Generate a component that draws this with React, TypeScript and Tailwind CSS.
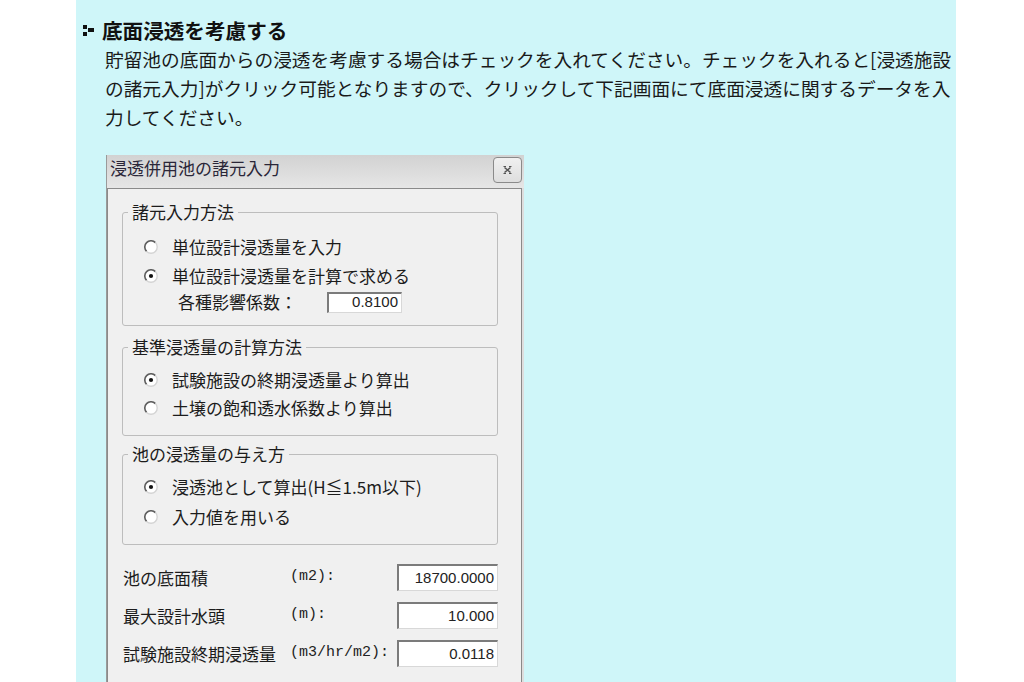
const jp = { fontFamily: '"Noto Sans CJK JP", "Noto Sans", sans-serif' };

const Radio = ({ checked }: { checked?: boolean }) => (
	<svg width="14" height="14" viewBox="0 0 14 14" className="shrink-0">
		<circle cx="7" cy="7" r="6" fill="#ffffff" />
		<path d="M2.6 11.4 A6.2 6.2 0 0 1 11.4 2.6" fill="none" stroke="#5e5e5e" strokeWidth="1.6" />
		<path d="M11.4 2.6 A6.2 6.2 0 0 1 2.6 11.4" fill="none" stroke="#d4d4d4" strokeWidth="1.4" />
		{checked && <circle cx="7" cy="7" r="2.1" fill="#111111" />}
	</svg>
);

const NumBox = ({ value, className }: { value: string; className: string }) => (
	<div
		className={`${className} bg-white border-t-2 border-l-2 border-r border-b border-t-[#7b7b7b] border-l-[#7b7b7b] border-r-[#d8d8d8] border-b-[#d8d8d8] flex items-center justify-end pr-[3px] text-[15px] text-[#222]`}
		style={{ fontFamily: '"Liberation Sans", Arial, sans-serif' }}
	>
		{value}
	</div>
);

const Group = ({
	title,
	children,
	className,
}: {
	title: string;
	children: React.ReactNode;
	className: string;
}) => (
	<fieldset className={`border border-[#bdbdbd] rounded-[3px] pl-[21px] ${className}`}>
		<legend className="px-[4px] -ml-[16px] leading-[20px]">{title}</legend>
		{children}
	</fieldset>
);

const RadioRow = ({ label, checked, h }: { label: string; checked?: boolean; h: string }) => (
	<div className={`flex items-center gap-[14px] ${h}`}>
		<Radio checked={checked} />
		<span>{label}</span>
	</div>
);

const FieldRow = ({ label, unit, value }: { label: string; unit: string; value: string }) => (
	<div className="flex items-center h-[27px]">
		<span className="w-[167px]">{label}</span>
		<span
			className="w-[107px] text-[15px] text-[#222]"
			style={{ fontFamily: '"Liberation Mono", "DejaVu Sans Mono", monospace' }}
		>
			{unit}
		</span>
		<NumBox value={value} className="w-[101px] h-[27px]" />
	</div>
);

export default function App() {
	return (
		<div className="w-[1024px] h-[682px] overflow-hidden bg-white flex" style={jp}>
			<div className="ml-[76px] w-[880px] h-full bg-[#cff6f9] pt-[18px] pl-[7px]">
				<div className="flex items-center h-[24px] gap-[7px]">
					<svg width="12" height="11" viewBox="0 0 12 11">
						<rect x="0" y="0" width="4" height="4" fill="#111" />
						<rect x="5" y="3" width="6" height="4" fill="#111" />
						<rect x="0" y="7" width="4" height="4" fill="#111" />
					</svg>
					<span className="text-[20.6px] font-bold text-[#111] leading-[24px]">底面浸透を考慮する</span>
				</div>
				<div className="ml-[22px] mt-[1.5px] text-[18.7px] leading-[29px] text-[#1a1a1a] whitespace-nowrap">
					<div>貯留池の底面からの浸透を考慮する場合はチェックを入れてください。チェックを入れると[浸透施設</div>
					<div>の諸元入力]がクリック可能となりますので、クリックして下記画面にて底面浸透に関するデータを入</div>
					<div>力してください。</div>
				</div>

				<div className="ml-[23px] mt-[24.5px] w-[418px] bg-[#dedede] border-l border-[#9a9a9a] text-[17px] text-[#1c1c1c]">
					<div className="h-[33px] flex items-start bg-gradient-to-b from-[#d2d2d2] to-[#e6e6e6]">
						<span className="pl-[3px] pt-[1px] leading-[24px] text-[#2a2638]">浸透併用池の諸元入力</span>
						<div className="ml-auto mr-[2px] mt-[2px] w-[29px] h-[26px] rounded-[4px] border border-[#8a8a8a] bg-gradient-to-b from-[#f0f0f0] to-[#dedede] flex items-center justify-center">
							<svg width="9" height="8" viewBox="0 0 9 8">
								<path d="M1.5 1.5 L7.5 6.5 M7.5 1.5 L1.5 6.5" stroke="#555" strokeWidth="1.5" />
								<path d="M0.5 0.5 h2.5 M6 0.5 h2.5 M0.5 7.5 h2.5 M6 7.5 h2.5" stroke="#555" strokeWidth="1" />
							</svg>
						</div>
					</div>
					<div className="mr-[2px] border border-[#8a8a8a] bg-[#f0f0f0] pt-[13px] pl-[14px] pr-[23px] h-[520px]">
						<Group title="諸元入力方法" className="pt-[10px] pb-[11px]">
							<RadioRow label="単位設計浸透量を入力" h="h-[29px]" />
							<RadioRow label="単位設計浸透量を計算で求める" checked h="h-[29px]" />
							<div className="flex items-center h-[24px] pl-[34px]">
								<span className="w-[149px]">各種影響係数：</span>
								<NumBox value="0.8100" className="w-[75px] h-[21px]" />
							</div>
						</Group>
						<Group title="基準浸透量の計算方法" className="mt-[11px] pt-[9px] pb-[13px]">
							<RadioRow label="試験施設の終期浸透量より算出" checked h="h-[28px]" />
							<RadioRow label="土壌の飽和透水係数より算出" h="h-[28px]" />
						</Group>
						<Group title="池の浸透量の与え方" className="mt-[8px] pt-[8px] pb-[12px]">
							<RadioRow label="浸透池として算出(H≦1.5m以下)" checked h="h-[30px]" />
							<RadioRow label="入力値を用いる" h="h-[30px]" />
						</Group>
						<div className="mt-[19px] pl-[1px] flex flex-col gap-[11px]">
							<FieldRow label="池の底面積" unit="(m2):" value="18700.0000" />
							<FieldRow label="最大設計水頭" unit="(m):" value="10.000" />
							<FieldRow label="試験施設終期浸透量" unit="(m3/hr/m2):" value="0.0118" />
						</div>
					</div>
				</div>
			</div>
		</div>
	);
}
